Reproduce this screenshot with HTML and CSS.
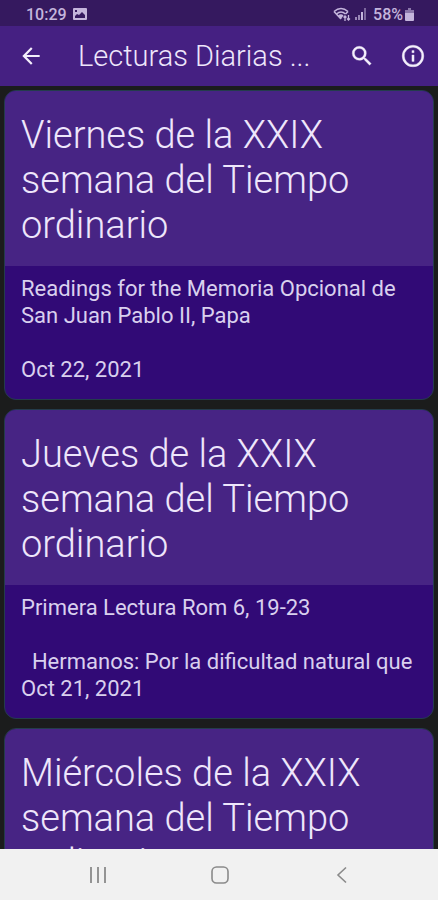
FILE: index.html
```
<!DOCTYPE html>
<html lang="es">
<head>
    <meta charset="UTF-8">
    <meta name="viewport" content="width=device-width, initial-scale=1.0">
    <title>Lecturas Diarias</title>
    <link rel="stylesheet" href="styles.css">
</head>
<body>
    <div class="status-bar">
        <span>10:29</span>
        <svg class="picture" width="14" height="12" viewBox="0 0 14 12">
            <path fill="currentColor" fill-rule="evenodd" d="M1 0h12a1 1 0 0 1 1 1v10a1 1 0 0 1-1 1H1a1 1 0 0 1-1-1V1a1 1 0 0 1 1-1zM2 10h10V7L9 4 6 7 4 6 2 8zM2 2v2h2V2z"/>
        </svg>
        <svg class="wifi" width="18" height="15" viewBox="0 0 18 15">
            <g fill="none" stroke="currentColor" stroke-width="1.6">
                <path d="M1 4.5Q8 -1.5 15 4.5"/>
                <path d="M3.5 7Q8 3 12.5 7"/>
                <path d="M1 4.5L8 12M15 4.5L12.5 7"/>
                <path stroke-width="1.3" d="M12 14V9M10.5 10.5L12 9l1.5 1.5M15.5 8v5M14 11.5l1.5 1.5 1.5-1.5"/>
            </g>
            <path fill="currentColor" d="M5 8.5Q8 6 10.5 8.5L8 12z"/>
        </svg>
        <svg class="signal" width="12" height="12" viewBox="0 0 12 12" fill="currentColor">
            <path opacity=".7" d="M0 9h2v3H0zM3 7h2v5H3z"/>
            <path d="M6 4h2v8H6z"/>
            <path opacity=".5" d="M9 0h2v12H9z"/>
        </svg>
        <span>58%</span>
        <svg class="battery" width="9" height="13" viewBox="0 0 9 13" fill="currentColor">
            <path opacity=".6" d="M3 0h3v2h3v4H0V2h3z"/>
            <path d="M0 5h9v7a1 1 0 0 1-1 1H1a1 1 0 0 1-1-1z"/>
        </svg>
    </div>

    <header class="app-bar">
        <button class="icon-button" aria-label="Volver">
            <svg width="26" height="26" viewBox="0 0 24 24"><path fill="currentColor" d="M20 11H7.83l5.59-5.59L12 4l-8 8 8 8 1.41-1.41L7.83 13H20v-2z"/></svg>
        </button>
        <h1>Lecturas Diarias ...</h1>
        <button class="icon-button" aria-label="Buscar">
            <svg width="26" height="26" viewBox="0 0 24 24"><path fill="currentColor" stroke="currentColor" stroke-width=".3" d="M15.5 14h-.79l-.28-.27A6.47 6.47 0 0 0 16 9.5 6.5 6.5 0 1 0 9.5 16c1.61 0 3.09-.59 4.23-1.57l.27.28v.79l5 4.99L20.49 19l-4.99-5zm-6 0a4.5 4.5 0 1 1 0-9 4.5 4.5 0 0 1 0 9z"/></svg>
        </button>
        <button class="icon-button" aria-label="Información">
            <svg width="26" height="26" viewBox="0 0 24 24"><path fill="currentColor" stroke="currentColor" stroke-width=".3" d="M11 7h2v2h-2zm0 4h2v6h-2zm1-9a10 10 0 1 0 0 20 10 10 0 0 0 0-20zm0 18a8 8 0 1 1 0-16 8 8 0 0 1 0 16z"/></svg>
        </button>
    </header>

    <main class="readings">
        <article class="card">
            <h2>Viernes de la XXIX semana del Tiempo ordinario</h2>
            <div class="card-body">
                <p class="excerpt">Readings for the Memoria Opcional de San Juan Pablo II, Papa</p>
                <time datetime="2021-10-22">Oct 22, 2021</time>
            </div>
        </article>
        <article class="card">
            <h2>Jueves de la XXIX semana del Tiempo ordinario</h2>
            <div class="card-body">
                <p class="excerpt">Primera Lectura Rom 6, 19-23<br><br>&nbsp; Hermanos: Por la dificultad natural que</p>
                <time datetime="2021-10-21">Oct 21, 2021</time>
            </div>
        </article>
        <article class="card">
            <h2>Miércoles de la XXIX semana del Tiempo ordinario</h2>
        </article>
    </main>

    <nav class="nav-bar">
        <button aria-label="Recientes">
            <svg width="20" height="20" viewBox="0 0 20 20"><path stroke="currentColor" stroke-width="1.8" d="M3 2v16M10 2v16M17 2v16"/></svg>
        </button>
        <button aria-label="Inicio">
            <svg width="20" height="20" viewBox="0 0 20 20"><rect x="2" y="2" width="16" height="16" rx="4.5" fill="none" stroke="currentColor" stroke-width="1.6"/></svg>
        </button>
        <button aria-label="Atrás">
            <svg width="20" height="20" viewBox="0 0 20 20"><path fill="none" stroke="currentColor" stroke-width="1.6" d="M14 2.5L6 10l8 7.5"/></svg>
        </button>
    </nav>
</body>
</html>
```
FILE: styles.css
```
* {
    box-sizing: border-box;
}
body {
    display: flex;
    flex-direction: column;
    height: 100vh;
    margin: 0;
    overflow: hidden;
    background: #1b1c1c;
    color: #eee6fb;
    font-family: Roboto, sans-serif;
}
h1, h2, p {
    margin: 0;
}
button {
    display: flex;
    align-items: center;
    justify-content: center;
    padding: 0;
    border: 0;
    background: none;
    color: inherit;
}

/* Status bar */
.status-bar {
    display: flex;
    flex: none;
    align-items: center;
    height: 26px;
    padding: 2px 24px 0 26px;
    background: #35195f;
    color: #c4b5dc;
    font-size: 16px;
    font-weight: 500;
}
.picture {
    margin-left: 6px;
}
.wifi {
    margin-left: auto;
}
.signal {
    margin: 0 6px 0 4px;
}
.battery {
    margin-left: 2px;
}

/* App bar */
.app-bar {
    display: flex;
    flex: none;
    align-items: center;
    height: 60px;
    padding: 0 0 0 5px;
    background: #452082;
}
.app-bar h1 {
    flex: 1;
    padding-left: 22px;
    font-size: 29px;
    font-weight: 300;
    white-space: nowrap;
}
.icon-button {
    flex: none;
    width: 51px;
    height: 51px;
    color: #f4effc;
}

/* Readings */
.readings {
    display: flex;
    flex: 1;
    flex-direction: column;
    gap: 9px;
    min-height: 0;
    padding: 4px 4px 0;
    overflow: hidden;
}
.card {
    flex: none;
    border: 1px solid #243c4c;
    border-radius: 12px;
    background: #310a76;
    overflow: hidden;
}
.card h2 {
    padding: 22px 16px 18px;
    background: #472484;
    font-size: 38px;
    font-weight: 300;
    line-height: 45px;
}
.card-body {
    padding: 9px 16px 16px;
    color: #d9d0ee;
    font-size: 22px;
    line-height: 27px;
}
.excerpt {
    min-height: 81px;
}
.card-body time {
    display: block;
}

/* Navigation bar */
.nav-bar {
    display: flex;
    flex: none;
    justify-content: space-between;
    height: 51px;
    padding: 0 65px 0 67px;
    background: #f1f1f1;
    color: #8a8a8a;
}
.nav-bar button {
    width: 62px;
}
```
